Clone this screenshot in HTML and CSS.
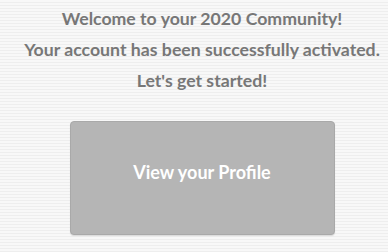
FILE: index.html
```html
<!DOCTYPE html>
<html>
<head>
<meta charset="utf-8">
<link rel="stylesheet" href="styles.css">
</head>
<body>
<div class="page">
  <div class="welcome">
    <p class="line">Welcome to your 2020 Community!</p>
    <p class="line">Your account has been successfully activated.</p>
    <p class="line">Let's get started!</p>
  </div>
  <a class="profile-btn" href="#">View your Profile</a>
</div>
</body>
</html>
```
FILE: styles.css
```css
html, body {
  margin: 0;
  padding: 0;
}
body {
  width: 388px;
  height: 252px;
  overflow: hidden;
  background: repeating-linear-gradient(to bottom, #f8f8f8 0px, #f8f8f8 2px, #eeeeee 2px, #eeeeee 3px);
  font-family: Lato, "Liberation Sans", sans-serif;
}
.page {
  display: flex;
  flex-direction: column;
  align-items: center;
  padding: 3px 0 0 16px;
}
.welcome {
  display: flex;
  flex-direction: column;
  align-items: center;
}
.line {
  margin: 0;
  font-size: 17.7px;
  font-weight: 700;
  line-height: 31px;
  color: #777777;
  white-space: nowrap;
}
.profile-btn {
  margin-top: 25px;
  width: 265px;
  height: 114px;
  box-sizing: border-box;
  padding-bottom: 12px;
  display: flex;
  align-items: center;
  justify-content: center;
  background: #b5b5b5;
  border: 1px solid #a9a9a9;
  border-radius: 4px;
  box-shadow: 0 1px 1px rgba(0,0,0,0.12);
  color: #ffffff;
  font-size: 18px;
  font-weight: 700;
  text-decoration: none;
}
```
